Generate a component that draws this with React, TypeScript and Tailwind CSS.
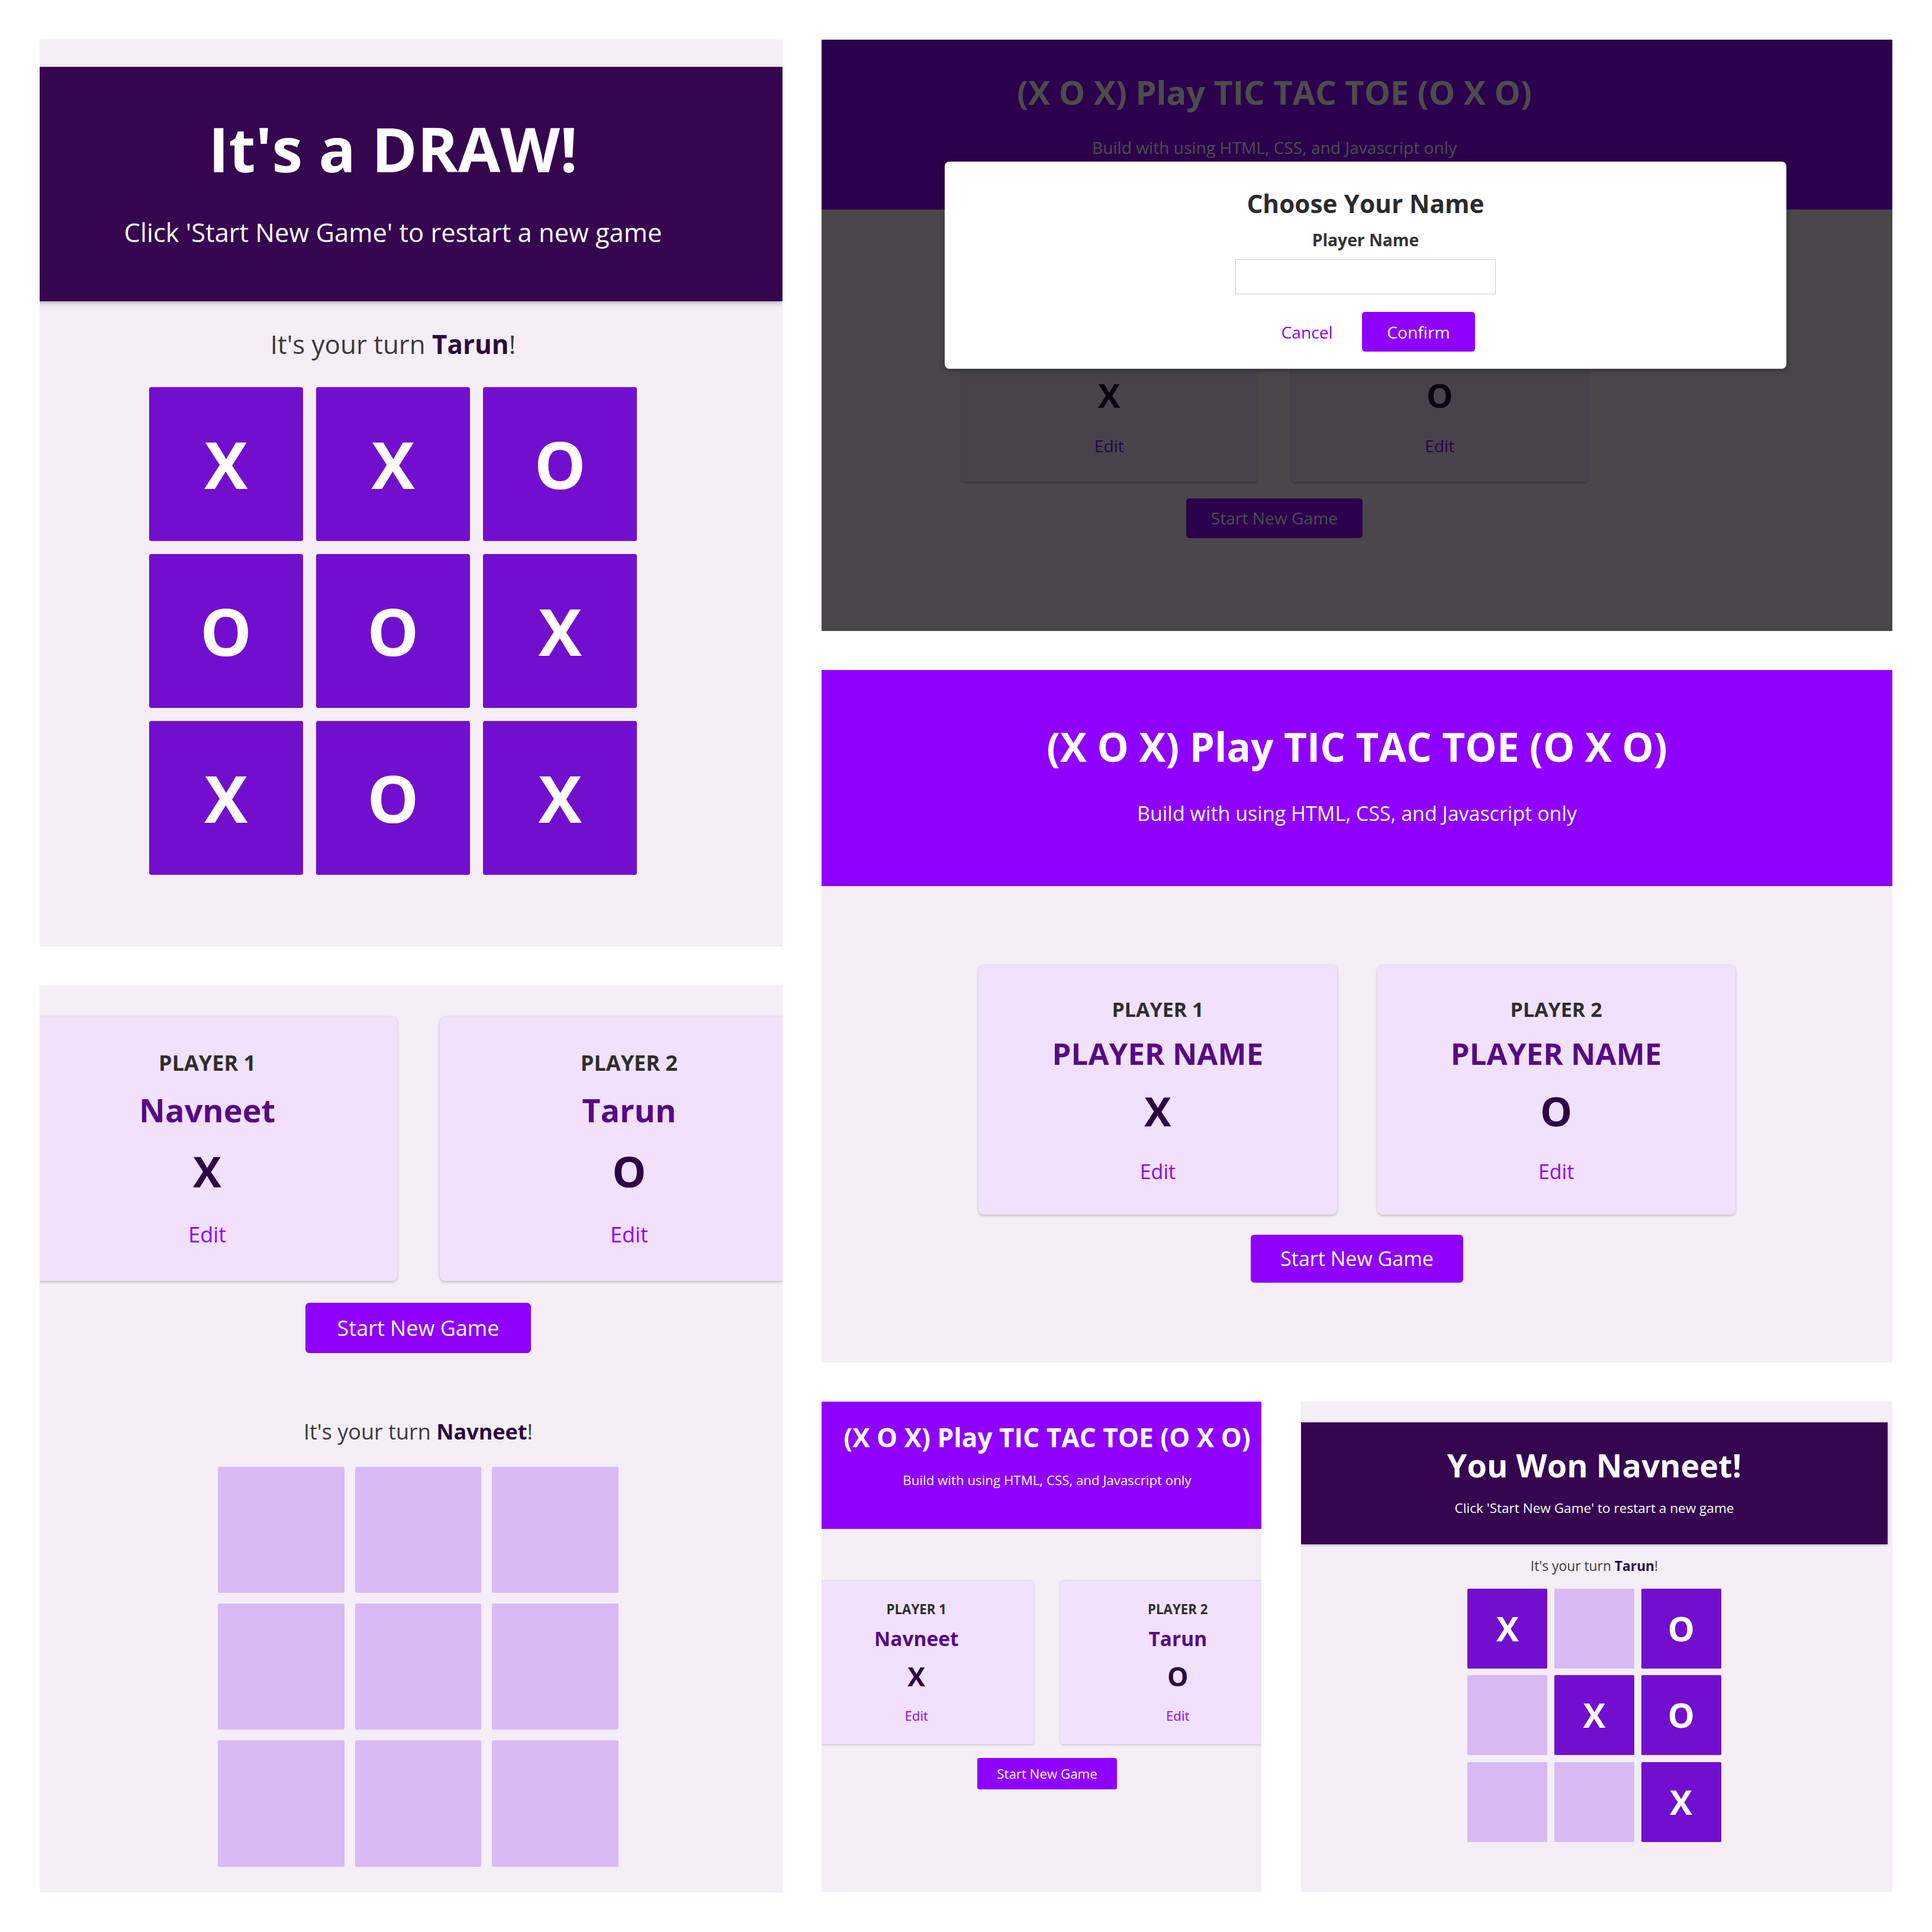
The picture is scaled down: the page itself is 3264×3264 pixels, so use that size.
import React from "react";

type Cell = "X" | "O" | "";

function Board({ cells }: { cells: Cell[] }) {
  return (
    <div className="mt-[0.94em] grid grid-cols-[repeat(3,5.92em)] auto-rows-[5.92em] gap-[0.51em]">
      {cells.map((c, i) =>
        c ? (
          <div key={i} className="bg-[#720fcf] rounded-[0.08em] flex items-center justify-center">
            <span className="text-[2.5em] font-bold leading-none text-white">{c}</span>
          </div>
        ) : (
          <div key={i} className="bg-[#d8baf4] rounded-[0.08em]" />
        )
      )}
    </div>
  );
}

function Turn({ name, className }: { name: string; className: string }) {
  return (
    <div className={`h-[1.4em] flex items-center whitespace-nowrap ${className}`}>
      <span className="leading-none text-[#3a3a3a]">
        It&apos;s your turn <b className="font-bold text-[#2a0a3f]">{name}</b>!
      </span>
    </div>
  );
}

function PlayerCard({ label, name, sym }: { label: string; name: string; sym: string }) {
  return (
    <div className="w-[17.8em] h-[12.38em] shrink-0 bg-[#f2e1fc] rounded-[0.25em] shadow-[0_0.04em_0.14em_rgba(0,0,0,0.22)] pt-[1.2em] flex flex-col items-center whitespace-nowrap">
      <div className="h-[1.94em] flex items-center">
        <span className="font-bold leading-none text-[#2e2e2e]">{label}</span>
      </div>
      <div className="h-[2.44em] flex items-center">
        <span className="text-[1.5em] font-bold leading-none text-[#560a86]">{name}</span>
      </div>
      <div className="h-[3.3em] flex items-center">
        <span className="text-[2em] font-bold leading-none text-[#2b0545]">{sym}</span>
      </div>
      <div className="h-[2.7em] flex items-center">
        <span className="leading-none text-[#8f00ff]">Edit</span>
      </div>
    </div>
  );
}

function Cards({ n1, n2, className }: { n1: string; n2: string; className: string }) {
  return (
    <div className={`flex gap-[2em] justify-center ${className}`}>
      <PlayerCard label="PLAYER 1" name={n1} sym="X" />
      <PlayerCard label="PLAYER 2" name={n2} sym="O" />
    </div>
  );
}

function StartButton({ className }: { className: string }) {
  return (
    <div className={`w-[10.58em] h-[2.38em] bg-[#8f00ff] rounded-[0.18em] text-white flex items-center justify-center whitespace-nowrap ${className}`}>
      <span className="leading-none">Start New Game</span>
    </div>
  );
}

function StartHeader({ className }: { className: string }) {
  return (
    <div className={`w-full shrink-0 bg-[#8f00ff] text-white flex flex-col items-center ${className}`}>
      <div className="h-[2.4em] flex items-center whitespace-nowrap">
        <span className="text-[1.98em] font-bold leading-none">(X O X) Play TIC TAC TOE (O X O)</span>
      </div>
      <div className="mt-[1.4em] h-[1.4em] flex items-center whitespace-nowrap">
        <span className="leading-none">Build with using HTML, CSS, and Javascript only</span>
      </div>
    </div>
  );
}

function OverHeader({ title }: { title: string }) {
  return (
    <div className="w-full shrink-0 h-[9.02em] pt-[1.94em] bg-[#350550] text-white shadow-[0_0.06em_0.2em_rgba(0,0,0,0.3)] flex flex-col items-center">
      <div className="h-[2.4em] flex items-center whitespace-nowrap">
        <span className="text-[2.37em] font-bold leading-none">{title}</span>
      </div>
      <div className="mt-[1.34em] h-[1.4em] flex items-center whitespace-nowrap">
        <span className="text-[0.99em] leading-none">Click &apos;Start New Game&apos; to restart a new game</span>
      </div>
    </div>
  );
}

const drawCells: Cell[] = ["X", "X", "O", "O", "O", "X", "X", "O", "X"];
const emptyCells: Cell[] = ["", "", "", "", "", "", "", "", ""];
const wonCells: Cell[] = ["X", "", "O", "", "X", "O", "", "", "X"];

export default function App() {
  return (
    <div className="w-[3264px] h-[3264px] bg-white p-[67px] flex gap-[66px] font-['Open_Sans',sans-serif]">
      {/* Left column */}
      <div className="w-[1255px] shrink-0 flex flex-col gap-[66px]">
        {/* Panel A: draw */}
        <div className="w-[1255px] h-[1532px] shrink-0 bg-[#f5eef7] overflow-hidden text-[43.9px]">
          <div className="-ml-[61px] w-[1316px] pt-[46px] flex flex-col items-center">
            <OverHeader title="It's a DRAW!" />
            <Turn name="Tarun" className="mt-[0.96em]" />
            <Board cells={drawCells} />
          </div>
        </div>
        {/* Panel D: players + empty board */}
        <div className="w-[1255px] h-[1532px] shrink-0 bg-[#f5eef7] overflow-hidden text-[36px]">
          <div className="-ml-[38px] w-[1355px] pt-[53px] flex flex-col items-center">
            <Cards n1="Navneet" n2="Tarun" className="" />
            <StartButton className="mt-[1.03em]" />
            <Turn name="Navneet" className="mt-[2.97em]" />
            <Board cells={emptyCells} />
          </div>
        </div>
      </div>

      {/* Right column */}
      <div className="w-[1809px] shrink-0 flex flex-col gap-[66px]">
        {/* Panel B: modal */}
        <div className="relative w-[1809px] h-[999px] shrink-0 bg-[#f5eef7] overflow-hidden text-[28.2px]">
          <div className="-ml-[279px] w-[2088px] flex flex-col items-center">
            <StartHeader className="h-[10.16em] pt-[1.97em]" />
            <Cards n1="PLAYER NAME" n2="PLAYER NAME" className="mt-[3.94em]" />
            <StartButton className="mt-[1em]" />
          </div>
          <div className="absolute inset-0 bg-black/70" />
          <div className="absolute left-[208px] top-[206px] w-[1422px] h-[12.4em] bg-white rounded-[0.28em] shadow-[0_0.1em_0.4em_rgba(0,0,0,0.3)] pt-[1.77em] flex flex-col items-center whitespace-nowrap">
            <div className="h-[1.5em] flex items-center">
              <span className="text-[1.5em] font-bold leading-none text-[#2b2b2b]">Choose Your Name</span>
            </div>
            <div className="mt-[0.83em] h-[1.2em] flex items-center">
              <span className="font-bold leading-none text-[#333333]">Player Name</span>
            </div>
            <input readOnly aria-label="Player Name" className="mt-[0.54em] w-[15.6em] h-[2.12em] border border-[#cccccc] bg-white outline-none" />
            <div className="mt-[1.06em] flex gap-[0.25em]">
              <div className="h-[2.38em] px-[1.5em] flex items-center text-[#8f00ff]">
                <span className="leading-none">Cancel</span>
              </div>
              <div className="h-[2.38em] px-[1.5em] flex items-center bg-[#8f00ff] text-white rounded-[0.18em]">
                <span className="leading-none">Confirm</span>
              </div>
            </div>
          </div>
        </div>

        {/* Panel C: start */}
        <div className="w-[1809px] h-[1170px] shrink-0 bg-[#f5eef7] overflow-hidden text-[34px]">
          <div className="w-[1809px] flex flex-col items-center">
            <StartHeader className="h-[10.74em] pt-[2.62em]" />
            <Cards n1="PLAYER NAME" n2="PLAYER NAME" className="mt-[3.94em]" />
            <StartButton className="mt-[1em]" />
          </div>
        </div>

        {/* Bottom row */}
        <div className="h-[828px] shrink-0 flex gap-[67px]">
          {/* Panel E */}
          <div className="w-[743px] h-[828px] shrink-0 bg-[#f5eef7] overflow-hidden text-[22.3px]">
            <div className="-ml-[38px] w-[838px] flex flex-col items-center">
              <StartHeader className="h-[9.63em] pt-[1.49em]" />
              <Cards n1="Navneet" n2="Tarun" className="mt-[3.97em]" />
              <StartButton className="mt-[1.03em]" />
            </div>
          </div>
          {/* Panel F */}
          <div className="w-[999px] h-[828px] shrink-0 bg-[#f5eef7] overflow-hidden text-[22.8px]">
            <div className="w-[991px] pt-[35px] flex flex-col items-center">
              <OverHeader title="You Won Navneet!" />
              <Turn name="Tarun" className="mt-[0.96em]" />
              <Board cells={wonCells} />
            </div>
          </div>
        </div>
      </div>
    </div>
  );
}
